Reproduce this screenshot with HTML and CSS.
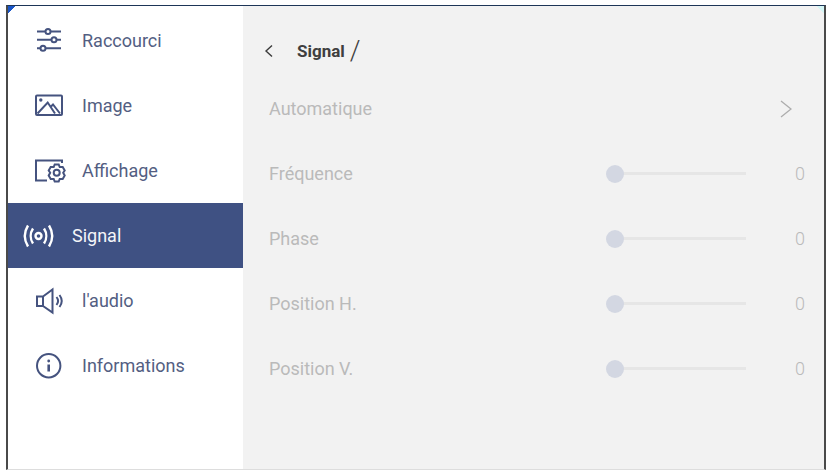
FILE: index.html
```html
<!DOCTYPE html>
<html>
<head>
    <title>Signal</title>
    <link rel="stylesheet" href="styles.css">
</head>
<body>
    <div class="frame">
        <div class="sidebar">
            <div class="menu-item">
                <svg class="icon" viewBox="0 0 28 28">
                    <path d="M2 4.500H10.500M15.500 4.500H26M2 12.800H16.500M21.500 12.800H26M2 21.200H5.500M10.500 21.200H26"/>
                    <circle cx="13" cy="4.500" r="2.500"/>
                    <circle cx="19" cy="12.800" r="2.500"/>
                    <circle cx="8" cy="21.200" r="2.500"/>
                </svg>
                <span>Raccourci</span>
            </div>
            <div class="menu-item">
                <svg class="icon" viewBox="0 0 28 28">
                    <rect x="1" y="3.500" width="26" height="19.500" rx="1"/>
                    <circle class="dot" cx="5.800" cy="8" r="1.700"/>
                    <path d="M2.500 21.500L12.700 10.500L20 21.500M15.500 15L18 12.500L25 21.500"/>
                </svg>
                <span>Image</span>
            </div>
            <div class="menu-item">
                <svg class="icon" viewBox="0 0 28 28">
                    <path d="M12 23.500H1V3.500H27V6"/>
                    <path d="M19.700 7.500H23.700L24.700 10L27.700 10L29.700 13.500L28.200 15.800L29.700 18.500L27.700 22L24.700 22L23.700 24.500H19.700L18.700 22L15.700 22L13.700 18.500L15.200 15.800L13.700 13.500L15.700 10L18.700 10Z"/>
                    <circle cx="21.700" cy="15.800" r="3"/>
                </svg>
                <span>Affichage</span>
            </div>
            <div class="menu-item active">
                <svg class="icon" viewBox="0 0 29 28">
                    <circle cx="14.500" cy="14" r="3"/>
                    <path d="M9 6.500C6 11 6 17 9 21.500M20 6.500C23 11 23 17 20 21.500"/>
                    <path d="M4 3.500C0 10 0 18 4 24.500M25 3.500C29 10 29 18 25 24.500"/>
                </svg>
                <span>Signal</span>
            </div>
            <div class="menu-item">
                <svg class="icon" viewBox="0 0 28 28">
                    <path d="M2 9.500H8V19H2ZM8 9.500L17.500 2.500V25.500L8 19"/>
                    <path d="M21.500 10C23.500 12.500 23.500 15.500 21.500 18M24.500 8C27.500 12 27.500 16 24.500 20"/>
                </svg>
                <span>l'audio</span>
            </div>
            <div class="menu-item">
                <svg class="icon" viewBox="0 0 28 28">
                    <circle cx="13.700" cy="13.800" r="11.700"/>
                    <path class="stem" d="M13.700 12.500V19.500"/>
                    <circle class="dot" cx="13.700" cy="9" r="1.400"/>
                </svg>
                <span>Informations</span>
            </div>
        </div>
        <div class="content">
            <div class="header">
                <svg class="back" viewBox="0 0 10 14"><path d="M8 1.500L2 7L8 12.500"/></svg>
                <span class="title">Signal</span>
                <span class="slash">/</span>
            </div>
            <div class="row">
                <span class="label">Automatique</span>
                <svg class="next" viewBox="0 0 12 18"><path d="M1 1L11 9L1 17"/></svg>
            </div>
            <div class="row">
                <span class="label">Fréquence</span>
                <div class="slider"><div class="thumb"></div></div>
                <span class="value">0</span>
            </div>
            <div class="row">
                <span class="label">Phase</span>
                <div class="slider"><div class="thumb"></div></div>
                <span class="value">0</span>
            </div>
            <div class="row">
                <span class="label">Position H.</span>
                <div class="slider"><div class="thumb"></div></div>
                <span class="value">0</span>
            </div>
            <div class="row">
                <span class="label">Position V.</span>
                <div class="slider"><div class="thumb"></div></div>
                <span class="value">0</span>
            </div>
        </div>
    </div>
</body>
</html>
```

FILE: styles.css
```css
body {
    margin: 0;
    background: #fff;
    font-family: Roboto, sans-serif;
}

.frame {
    display: flex;
    box-sizing: border-box;
    width: 820px;
    height: 465px;
    margin: 5px 0 0 6px;
    border: solid #4a4a4a;
    border-width: 1.500px 2px 1px 2px;
    border-top-color: #1d3557;
    border-bottom-color: #ddd;
}

.sidebar {
    width: 235px;
    padding-top: 2px;
    background: linear-gradient(135deg, #1a56c8 5px, #fff 5px);
}

.menu-item {
    display: flex;
    align-items: center;
    height: 65px;
    padding-left: 27px;
    font-size: 18px;
    color: #535e82;
}

.menu-item span {
    margin-left: 19px;
}

.icon {
    flex: none;
    width: 28px;
    height: 28px;
    fill: none;
    stroke: #45537f;
    stroke-width: 2;
    overflow: visible;
}

.icon .dot {
    fill: #45537f;
    stroke: none;
}

.icon .stem {
    stroke-width: 2.600;
}

.menu-item.active {
    padding-left: 16px;
    background: #3f5183;
    color: #f4f5f8;
}

.menu-item.active .icon {
    width: 29px;
    stroke: #fff;
    stroke-width: 2.400;
}

.content {
    flex: 1;
    padding-top: 2px;
    background: linear-gradient(225deg, #d5f5f5 5px, #f2f2f2 5px);
}

.header {
    display: flex;
    align-items: center;
    height: 68px;
    padding: 18px 0 0 21px;
    box-sizing: border-box;
}

.back {
    width: 10px;
    height: 14px;
    fill: none;
    stroke: #3c3c3c;
    stroke-width: 1.400;
}

.title {
    margin-left: 23px;
    font-size: 17px;
    font-weight: 700;
    color: #3f3f3f;
}

.slash {
    margin-left: 5px;
    font-size: 27px;
    font-weight: 300;
    color: #3f3f3f;
}

.row {
    display: flex;
    align-items: center;
    height: 65px;
    padding-left: 26px;
    color: #bababa;
    font-size: 18px;
}

.label {
    width: 346px;
}

.next {
    width: 12px;
    height: 18px;
    margin-left: 165px;
    fill: none;
    stroke: #adadad;
    stroke-width: 1.300;
}

.slider {
    position: relative;
    width: 131px;
    height: 3px;
    background: #e6e6e6;
}

.thumb {
    position: absolute;
    left: -9px;
    top: -7.500px;
    width: 18px;
    height: 18px;
    border-radius: 50%;
    background: #d3d7e2;
}

.value {
    margin-left: 49px;
    font-size: 18px;
    font-weight: 300;
}
```
